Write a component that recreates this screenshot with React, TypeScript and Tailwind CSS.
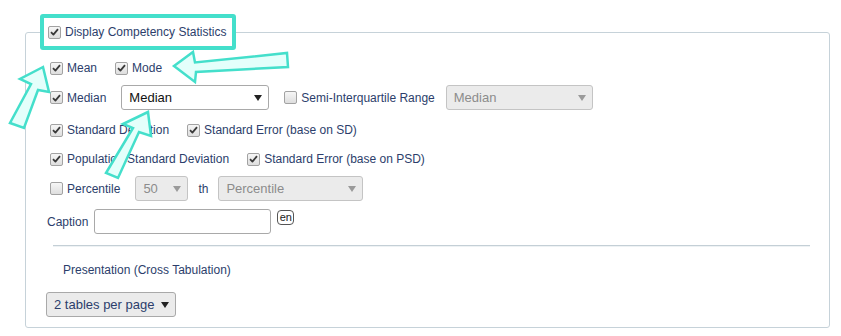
import React from 'react';

const Check = ({ checked = false, className = '' }: { checked?: boolean; className?: string }) => (
  <span
    className={`inline-flex h-[13px] w-[13px] shrink-0 items-center justify-center rounded-[2px] border border-[#a2a2a2] bg-gradient-to-b from-[#f6f6f6] to-[#dedede] ${className}`}
  >
    {checked && (
      <svg width="9" height="8" viewBox="0 0 9 8">
        <path d="M1 4.2 L3.4 6.6 L8 1.2" fill="none" stroke="#3a3a3a" strokeWidth="1.8" strokeLinejoin="round" />
      </svg>
    )}
  </span>
);

const Caret = ({ color }: { color: string }) => (
  <svg width="8" height="6" viewBox="0 0 8 6">
    <path d="M0 0 H8 L4 6 Z" fill={color} />
  </svg>
);

const Select = ({
  value,
  width,
  disabled = false,
  gray = false,
  className = '',
}: {
  value: string;
  width: string;
  disabled?: boolean;
  gray?: boolean;
  className?: string;
}) => (
  <div
    className={`flex h-[25px] shrink-0 items-center justify-between rounded-[3px] border pl-[7px] pr-[6px] text-[13px] ${width} ${
      disabled
        ? 'border-[#c4c4c4] bg-[#ebebeb] text-[#8c8c8c]'
        : gray
          ? 'border-[#a9a9a9] bg-[#ebebeb] text-[#2c3e6b]'
          : 'border-[#a9a9a9] bg-white text-[#111]'
    } ${className}`}
  >
    <span>{value}</span>
    <Caret color={disabled ? '#9a9a9a' : '#222'} />
  </div>
);

const Label = ({ children, className = '' }: { children: React.ReactNode; className?: string }) => (
  <span className={`ml-[4px] whitespace-nowrap text-[12px] text-[#2c3e6b] ${className}`}>{children}</span>
);

export default function App() {
  return (
    <div className="relative h-[336px] w-[841px] overflow-hidden bg-white font-['Liberation_Sans',Arial,sans-serif]">
      <fieldset className="ml-[25px] mt-[14px] h-[314px] w-[805px] rounded-[3px] border border-[#c6d2d9] pl-[14px]">
        <legend className="p-0">
          <div className="flex h-[36px] w-[196px] items-center rounded-[3px] border-4 border-[#44dfcb] bg-white">
            <Check checked className="ml-[4px]" />
            <Label>Display Competency Statistics</Label>
          </div>
        </legend>

        <div className="flex flex-col pl-[6px]">
          <div className="mt-[7px] flex h-[22px] items-center">
            <Check checked className="ml-[4px]" />
            <Label>Mean</Label>
            <Check checked className="ml-[18px]" />
            <Label>Mode</Label>
          </div>

          <div className="mt-[6px] flex h-[25px] items-center">
            <Check checked className="ml-[4px]" />
            <Label>Median</Label>
            <Select value="Median" width="w-[148px]" className="ml-[15px]" />
            <Check className="ml-[15px]" />
            <Label className="ml-[3px]">Semi-Interquartile Range</Label>
            <Select value="Median" width="w-[147px]" disabled className="ml-[11px]" />
          </div>

          <div className="mt-[9px] flex h-[22px] items-center">
            <Check checked className="ml-[4px]" />
            <Label>Standard Deviation</Label>
            <Check checked className="ml-[18px]" />
            <Label className="ml-[3px]">Standard Error (base on SD)</Label>
          </div>

          <div className="mt-[7px] flex h-[22px] items-center">
            <Check checked className="ml-[4px]" />
            <Label>Population Standard Deviation</Label>
            <Check checked className="ml-[18px]" />
            <Label className="ml-[3px]">Standard Error (base on PSD)</Label>
          </div>

          <div className="mt-[6px] flex h-[25px] items-center">
            <Check className="ml-[4px]" />
            <Label>Percentile</Label>
            <Select value="50" width="w-[53px]" disabled className="ml-[15px]" />
            <span className="ml-[10px] text-[12px] text-[#2c3e6b]">th</span>
            <Select value="Percentile" width="w-[145px]" disabled className="ml-[10px]" />
          </div>

          <div className="mt-[8px] flex h-[25px] items-center">
            <span className="ml-[1px] text-[12px] text-[#2c3e6b]">Caption</span>
            <div className="ml-[6px] h-[25px] w-[177px] rounded-[3px] border border-[#a9a9a9] bg-white" />
            <span className="ml-[6px] mt-[1px] flex h-[15px] w-[17px] items-center justify-center self-start rounded-[4px] border border-[#555] text-[11px] leading-none text-[#222]">
              en
            </span>
          </div>

          <div className="ml-[7px] mr-[19px] mt-[11px] h-[2px] border-t border-[#c4cfd6] bg-[#eef2f4]" />

          <div className="mt-[15px] flex h-[16px] items-center pl-[17px] text-[12px] text-[#2c3e6b]">
            Presentation (Cross Tabulation)
          </div>

          <Select value="2 tables per page" width="w-[130px]" gray className="mt-[14px] h-[24px] text-[12px]" />
        </div>
      </fieldset>

      <svg className="pointer-events-none absolute left-0 top-0" width="841" height="336" viewBox="0 0 841 336">
        <g fill="#e4fffb" stroke="#44dfcb" strokeWidth="2.5" strokeLinejoin="miter">
          <polygon points="174,66 193,52 195,62.5 287,53 288,67 196,72 195,82" />
          <polygon points="43,67 20,79 31,84 10,123 24,128 38,90 49,92" />
          <polygon points="148,112 123,124 133,128 106,173 118,178 139,132 151,136" />
        </g>
      </svg>
    </div>
  );
}
